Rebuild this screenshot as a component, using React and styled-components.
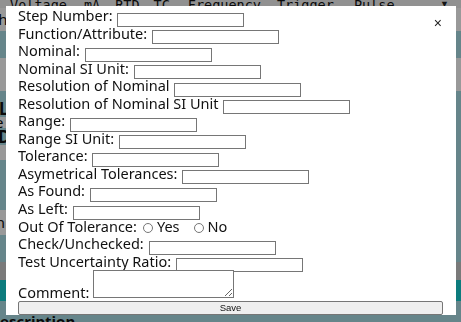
import styled, { createGlobalStyle } from 'styled-components'

const GlobalStyle = createGlobalStyle`
  html, body {
    margin: 0;
    padding: 0;
    overflow: hidden;
  }
  body {
    background: #aadee6;
    font-family: 'Noto Sans', 'Open Sans', sans-serif;
  }
`

const Page = styled.div`
  width: 461px;
  height: 322px;
  display: flex;
  flex-direction: column;
  overflow: hidden;
`
const TabBar = styled.div`
  height: 8px;
  flex: none;
  background: #f2f2f2;
  display: flex;
  align-items: flex-end;
  padding-left: 10px;
  overflow: hidden;
`
const Tab = styled.span`
  font-family: 'DejaVu Sans Mono', monospace;
  font-size: 13.5px;
  line-height: 14px;
  margin-bottom: -4px;
  margin-right: ${(p) => p.gap}px;
  color: #111;
`
const Caret = styled.span`
  margin-left: auto;
  margin-right: 12px;
  font-size: 9px;
  line-height: 8px;
  color: #222;
`
const Band = styled.div`
  flex: none;
  height: ${(p) => p.h}px;
  background: ${(p) => p.bg || 'transparent'};
  font-size: 15px;
  line-height: ${(p) => p.h}px;
  color: #111;
  text-indent: ${(p) => p.indent || 0}px;
  overflow: hidden;
  white-space: nowrap;
`
const LeftStack = styled.div`
  flex: none;
  width: 120px;
  display: flex;
  flex-direction: column;
`
const Heading = styled.div`
  height: ${(p) => p.h}px;
  line-height: ${(p) => p.h}px;
  font-weight: 700;
  font-size: 17px;
  color: #111;
  text-indent: ${(p) => p.indent || 0}px;
  overflow: hidden;
`
const Title = styled.div`
  flex: none;
  font-family: 'Open Sans', sans-serif;
  font-weight: 700;
  font-size: 15px;
  line-height: 14px;
  height: 8px;
  text-indent: -11px;
  color: #111;
`

const Overlay = styled.div`
  position: fixed;
  inset: 0;
  background: rgba(0, 0, 0, 0.4);
`
const Modal = styled.div`
  position: fixed;
  top: 6px;
  left: 6px;
  width: 450px;
  height: 309px;
  box-sizing: border-box;
  background: #fff;
  padding: 1px 13px 1px 12px;
  font-family: 'Noto Sans', 'Open Sans', sans-serif;
  font-size: 14.5px;
  color: #111;
`
const Close = styled.span`
  position: absolute;
  top: 9px;
  right: 14px;
  font-family: 'Liberation Sans', Arial, sans-serif;
  font-size: 14px;
  line-height: 16px;
  color: #222;
`
const Field = styled.div`
  line-height: 17.55px;
  height: 17.55px;
  white-space: nowrap;
`
const TextInput = styled.input`
  box-sizing: border-box;
  width: 127px;
  height: 14px;
  border: 1px solid #767676;
  border-radius: 0;
  padding: 0 2px;
  margin: 0 0 0 1px;
  font-size: 10px;
  vertical-align: -2px;
  background: #fff;
`
const Radio = styled.input`
  appearance: none;
  box-sizing: border-box;
  width: 10px;
  height: 10px;
  border: 1px solid #767676;
  border-radius: 50%;
  margin: 0 ${(p) => p.after}px 0 ${(p) => p.before}px;
  vertical-align: -1px;
`
const CommentRow = styled.div`
  line-height: 17.55px;
  white-space: nowrap;
  height: 31px;
  display: flex;
  align-items: flex-end;
  gap: 4px;
`
const TextArea = styled.textarea`
  box-sizing: border-box;
  width: 141px;
  height: 28px;
  border: 1px solid #767676;
  margin: 0 0 3px 0;
  padding: 1px;
  font-size: 10px;
  resize: both;
`
const SaveButton = styled.button`
  display: block;
  box-sizing: border-box;
  width: 425px;
  height: 14px;
  padding: 0;
  background: #efefef;
  border: 1px solid #767676;
  border-radius: 2px;
  font-family: 'Liberation Sans', Arial, sans-serif;
  font-size: 9.5px;
  line-height: 12px;
  color: #111;
`

const tabs = [
  ['Voltage', 17],
  ['mA', 15],
  ['RTD', 14],
  ['TC', 18],
  ['Frequency', 16],
  ['Trigger', 20],
  ['Pulse', 0],
]

const fields = [
  'Step Number:',
  'Function/Attribute:',
  'Nominal:',
  'Nominal SI Unit:',
  'Resolution of Nominal',
  'Resolution of Nominal SI Unit',
  'Range:',
  'Range SI Unit:',
  'Tolerance:',
  'Asymetrical Tolerances:',
  'As Found:',
  'As Left:',
]

const BackgroundPage = () => (
  <Page>
    <TabBar>
      {tabs.map(([t, gap]) => (
        <Tab key={t} gap={gap}>
          {t}
        </Tab>
      ))}
      <Caret>▼</Caret>
    </TabBar>
    <Band h={23} bg="#ffffff" indent={-10}>
      Show
    </Band>
    <Band h={27} />
    <Band h={33} bg="#ffffff" />
    <Band h={9} />
    <LeftStack>
      <Heading h={17} indent={-1}>
        L
      </Heading>
      <Band h={11} bg="#ffffff" indent={-5}>
        e
      </Band>
      <Heading h={17} indent={-2}>
        D
      </Heading>
      <Band h={15} bg="#ffffff" />
      <Band h={50} />
      <Band h={25} bg="#ffffff" indent={-8}>
        in
      </Band>
    </LeftStack>
    <Band h={27} />
    <Band h={18} bg="#cbcbcb" />
    <Band h={21} bg="#17cdd0" />
    <Band h={13} />
    <Title>Description</Title>
  </Page>
)

const App = () => (
  <>
    <GlobalStyle />
    <BackgroundPage />
    <Overlay />
    <Modal>
      <Close>×</Close>
      {fields.map((f) => (
        <Field key={f}>
          {f} <TextInput type="text" />
        </Field>
      ))}
      <Field>
        Out Of Tolerance:
        <Radio type="radio" name="oot" before={6} after={4} />
        Yes
        <Radio type="radio" name="oot" before={14} after={4} />
        No
      </Field>
      <Field>
        Check/Unchecked: <TextInput type="text" />
      </Field>
      <Field>
        Test Uncertainty Ratio: <TextInput type="text" />
      </Field>
      <CommentRow>
        Comment: <TextArea />
      </CommentRow>
      <SaveButton>Save</SaveButton>
    </Modal>
  </>
)

export default App
